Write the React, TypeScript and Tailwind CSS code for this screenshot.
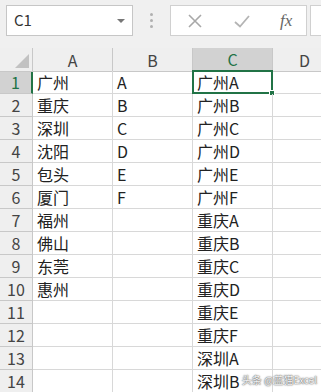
import React from 'react'

const colA = ['广州', '重庆', '深圳', '沈阳', '包头', '厦门', '福州', '佛山', '东莞', '惠州', '', '', '', '']
const colB = ['A', 'B', 'C', 'D', 'E', 'F', '', '', '', '', '', '', '', '']
const colC = [
  '广州A', '广州B', '广州C', '广州D', '广州E', '广州F',
  '重庆A', '重庆B', '重庆C', '重庆D', '重庆E', '重庆F',
  '深圳A', '深圳B',
]

const font = { fontFamily: '"Noto Sans CJK SC", "Noto Sans", sans-serif' }

function Toolbar() {
  return (
    <div className="flex h-[48px] items-start bg-[#f0f0f0] pt-[5px]">
      <div className="ml-[6px] flex h-[31px] w-[127px] items-center justify-between border border-[#c6c6c6] bg-white pl-[7px] pr-[7px]">
        <span className="text-[15px] text-[#333]">C1</span>
        <span className="h-0 w-0 border-x-[4px] border-t-[4px] border-x-transparent border-t-[#777]" />
      </div>
      <div className="flex h-[31px] w-[37px] flex-col items-center justify-center gap-[3px]">
        <span className="h-[3px] w-[3px] rounded-full bg-[#b0b0b0]" />
        <span className="h-[3px] w-[3px] rounded-full bg-[#b0b0b0]" />
        <span className="h-[3px] w-[3px] rounded-full bg-[#b0b0b0]" />
      </div>
      <div className="flex h-[31px] w-[137px] items-center border border-[#d0d0d0] bg-white">
        <svg width="14" height="14" viewBox="0 0 14 14" className="ml-[17px]">
          <path d="M1 1 L13 13 M13 1 L1 13" stroke="#a8a8a8" strokeWidth="1.6" />
        </svg>
        <svg width="16" height="14" viewBox="0 0 16 14" className="ml-[32px]">
          <path d="M1 8 L6 12.5 L15 2" stroke="#b4b4b4" strokeWidth="1.8" fill="none" />
        </svg>
        <span
          className="ml-[30px] text-[17px] italic text-[#666]"
          style={{ fontFamily: '"Liberation Serif", serif' }}
        >
          fx
        </span>
      </div>
      <div className="ml-[3px] h-[31px] flex-1 border border-r-0 border-[#d0d0d0] bg-white" />
    </div>
  )
}

function HeaderRow() {
  return (
    <div className="grid h-[23px] grid-cols-[33px_80px_80px_80px_1fr] bg-[#efefef] text-[16px] text-[#444]">
      <div className="relative border-b border-r border-[#c8c8c8]">
        <span className="absolute bottom-[3px] right-[3px] h-0 w-0 border-b-[14px] border-l-[14px] border-b-[#c2c2c2] border-l-transparent" />
      </div>
      <div className="flex items-center justify-center border-b border-r border-[#c8c8c8] leading-[22px]">A</div>
      <div className="flex items-center justify-center border-b border-r border-[#c8c8c8] leading-[22px]">B</div>
      <div className="flex items-center justify-center border-b-2 border-r border-b-[#217346] border-r-[#c8c8c8] bg-[#d2d2d2] leading-[22px] text-[#217346]">C</div>
      <div className="flex items-center border-b border-[#c8c8c8] pl-[26px] leading-[22px]">D</div>
    </div>
  )
}

function Row({ i }: { i: number }) {
  const selected = i === 0
  return (
    <div className="grid h-[23px] grid-cols-[33px_80px_80px_80px_1fr] text-[16px] text-[#222]">
      <div
        className={
          selected
            ? 'flex items-center justify-center border-b border-r-2 border-b-[#c8c8c8] border-r-[#217346] bg-[#d2d2d2] leading-[22px] text-[#217346]'
            : 'flex items-center justify-center border-b border-r border-[#c8c8c8] bg-[#efefef] leading-[22px] text-[#444]'
        }
      >
        {i + 1}
      </div>
      <div className="flex items-center overflow-hidden whitespace-nowrap border-b border-r border-[#d8d8d8] pl-[4px] leading-[22px]">{colA[i]}</div>
      <div className="flex items-center overflow-hidden whitespace-nowrap border-b border-r border-[#d8d8d8] pl-[4px] leading-[22px]">{colB[i]}</div>
      <div className="relative flex items-center whitespace-nowrap border-b border-r border-[#d8d8d8] pl-[4px] leading-[22px]">
        {colC[i]}
        {selected && (
          <>
            <span className="pointer-events-none absolute -left-px -top-px bottom-[-1px] right-[-1px] border-2 border-[#217346]" />
            <span className="absolute bottom-[-3px] right-[-3px] h-[6px] w-[6px] border border-white bg-[#217346]" />
          </>
        )}
      </div>
      <div className="border-b border-[#d8d8d8]" />
    </div>
  )
}

export default function App() {
  return (
    <div className="relative h-[392px] w-[321px] overflow-hidden bg-white" style={font}>
      <Toolbar />
      <HeaderRow />
      {colC.map((_, i) => (
        <Row key={i} i={i} />
      ))}
      <div
        className="absolute bottom-[5px] right-[4px] text-[10px] text-[#f4f4f4]"
        style={{ textShadow: '0 0 2px #666, 0 0 1px #444' }}
      >
        头条 @蓝猫Excel
      </div>
    </div>
  )
}
